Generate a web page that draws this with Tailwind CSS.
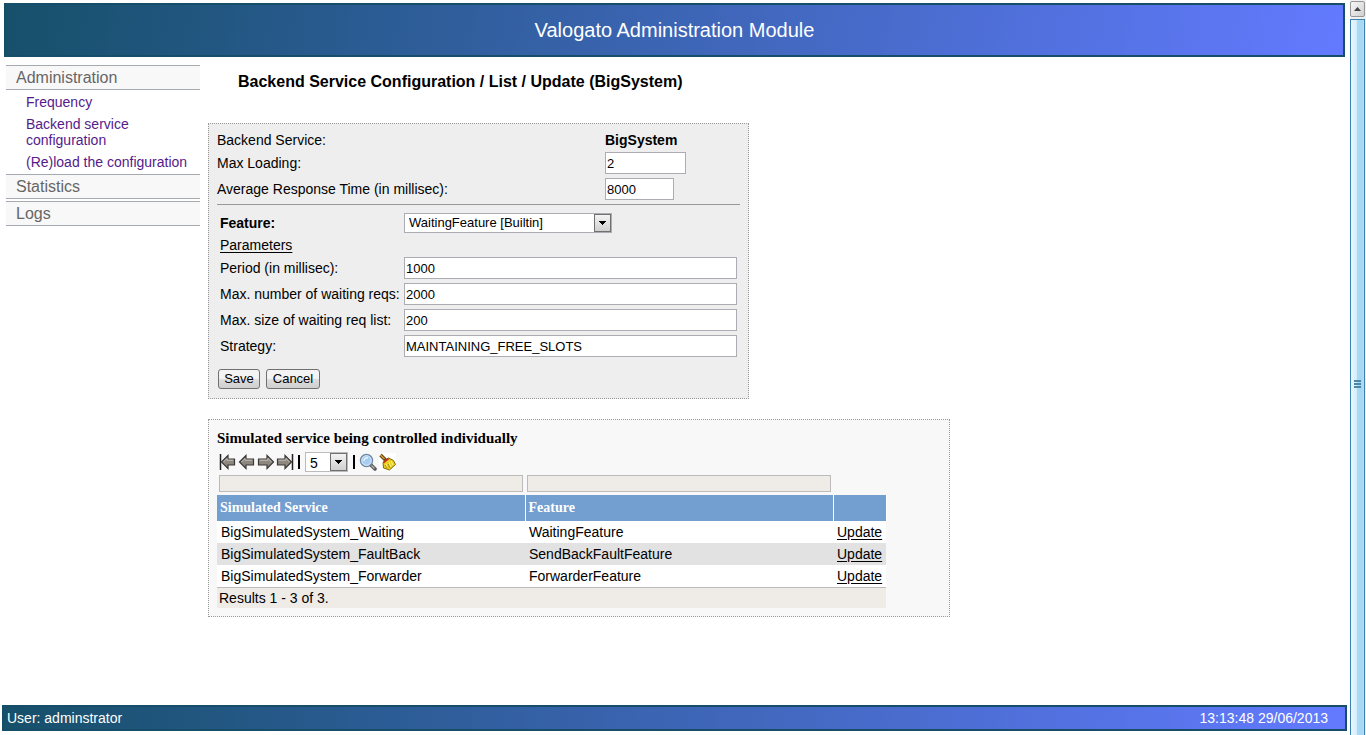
<!DOCTYPE html>
<html lang="en">
<head>
<meta charset="utf-8">
<meta name="viewport" content="width=device-width, initial-scale=1">
<title>Valogato Administration Module</title>
<script src="https://cdn.jsdelivr.net/npm/@tailwindcss/browser@4"></script>
</head>
<body class="flex min-h-screen bg-white font-['Liberation_Sans',Arial,sans-serif] text-sm leading-4 text-black">
<div class="flex min-w-0 flex-1 flex-col pt-[3px] pb-1">
  <header class="ml-1 mr-[5px] flex h-[54px] items-center justify-center border-2 border-[#164e6a] bg-linear-[100deg,#16506a,#637aff]">
    <h1 class="text-xl text-white">Valogato Administration Module</h1>
  </header>

  <div class="flex flex-1 items-start gap-2 pl-[6px] pt-2">
    <nav class="flex w-[194px] shrink-0 flex-col" aria-label="Main">
      <h2 class="h-[25px] border-y border-[#a5a9b0] bg-[#f8f8f8] pl-[10px] text-base leading-[23px] text-[#666]">Administration</h2>
      <ul class="flex flex-col gap-[6px] py-1 pl-5 text-[#551a8b]">
        <li><a href="#frequency">Frequency</a></li>
        <li><a href="#backend">Backend service<br>configuration</a></li>
        <li><a href="#reload" class="whitespace-nowrap">(Re)load the configuration</a></li>
      </ul>
      <h2 class="mb-[2px] h-[25px] border-y border-[#a5a9b0] bg-[#f8f8f8] pl-[10px] text-base leading-[23px] text-[#666]">Statistics</h2>
      <h2 class="h-[25px] border-y border-[#a5a9b0] bg-[#f8f8f8] pl-[10px] text-base leading-[23px] text-[#666]">Logs</h2>
    </nav>

    <main class="min-w-0 flex-1 pt-2">
      <h2 class="mb-8 pl-[30px] text-base leading-[18px] font-bold">Backend Service Configuration / List / Update (BigSystem)</h2>

      <form class="mb-5 w-full max-w-[541px] border border-dotted border-[#999] bg-[#eee] px-2 pt-2 pb-[9px]">
        <div class="grid grid-cols-[388px_1fr] items-center gap-y-1">
          <span>Backend Service:</span><strong>BigSystem</strong>
          <label for="load">Max Loading:</label>
          <input id="load" value="2" class="h-[22px] w-[81px] border border-[#abadb3] bg-white px-px text-[13px]">
          <label for="resp">Average Response Time (in millisec):</label>
          <input id="resp" value="8000" class="h-[22px] w-[69px] border border-[#abadb3] bg-white px-px text-[13px]">
        </div>
        <hr class="mt-1 mb-2 border-[#999]">
        <div class="grid grid-cols-[184px_333px] items-center gap-y-1 pl-[3px]">
          <label for="feat" class="font-bold">Feature:</label>
          <div class="relative h-5 w-[208px]">
            <select id="feat" class="h-5 w-full appearance-none border border-[#abadb3] bg-white pl-1 text-[13px]"><option>WaitingFeature [Builtin]</option></select>
            <span class="pointer-events-none absolute top-px right-px flex h-[18px] w-[17px] items-center justify-center border border-[#707070] bg-linear-to-b from-[#f3f3f3] to-[#d0d0d0]"><svg width="7" height="4" shape-rendering="crispEdges"><path d="M0 0h7L3.500 4z"/></svg></span>
          </div>
          <span class="col-span-2 underline underline-offset-2">Parameters</span>
          <label for="period">Period (in millisec):</label>
          <input id="period" value="1000" class="h-[22px] border border-[#abadb3] bg-white px-px text-[13px]">
          <label for="maxreq" class="whitespace-nowrap">Max. number of waiting reqs:</label>
          <input id="maxreq" value="2000" class="h-[22px] border border-[#abadb3] bg-white px-px text-[13px]">
          <label for="maxlist">Max. size of waiting req list:</label>
          <input id="maxlist" value="200" class="h-[22px] border border-[#abadb3] bg-white px-px text-[13px]">
          <label for="strategy">Strategy:</label>
          <input id="strategy" value="MAINTAINING_FREE_SLOTS" class="h-[22px] border border-[#abadb3] bg-white px-px text-[13px]">
        </div>
        <div class="mt-3 flex gap-[6px] pl-px">
          <button type="button" class="h-5 w-[42px] rounded-[3px] border border-[#707070] bg-linear-to-b from-[#f3f3f3] from-50% via-[#dedede] via-50% to-[#cfcfcf] text-[13px]">Save</button>
          <button type="button" class="h-5 w-[54px] rounded-[3px] border border-[#707070] bg-linear-to-b from-[#f3f3f3] from-50% via-[#dedede] via-50% to-[#cfcfcf] text-[13px]">Cancel</button>
        </div>
      </form>

      <section class="w-full max-w-[742px] border border-dotted border-[#999] bg-[#f8f8f8] px-2 pt-[9px] pb-2">
        <h3 class="font-['Liberation_Serif',serif] text-[15px] leading-[18px] font-bold">Simulated service being controlled individually</h3>
        <svg class="hidden">
          <defs>
            <linearGradient id="metal" x1="0" y1="0" x2="0" y2="1"><stop offset="0" stop-color="#b5b0a9"/><stop offset="1" stop-color="#6e6963"/></linearGradient>
          </defs>
        </svg>
        <div class="mt-[5px] flex h-5 items-center pl-[2px]">
          <button type="button" aria-label="First page" class="mr-px"><svg width="18" height="18" viewBox="0 0 18 18"><path d="M1.500 1v16" stroke="#222" stroke-width="1.500"/><path d="M2.500 9 9 2.500V6h6.500v6H9v3.500z" fill="#8d8780" stroke="#3a3835" stroke-width="1.200"/><path d="M4.500 9 8 5.500V7.200h6.300" fill="none" stroke="#c4bfb8"/></svg></button>
          <button type="button" aria-label="Previous page" class="mr-px"><svg width="18" height="18" viewBox="0 0 18 18"><path d="M1.500 9 8 2.500V6h7.500v6H8v3.500z" fill="#8d8780" stroke="#3a3835" stroke-width="1.200"/><path d="M3.500 9 7 5.500V7.200h7.300" fill="none" stroke="#c4bfb8"/></svg></button>
          <button type="button" aria-label="Next page" class="mr-px"><svg width="18" height="18" viewBox="0 0 18 18"><path d="M16.500 9 10 2.500V6H1.500v6H10v3.500z" fill="#8d8780" stroke="#3a3835" stroke-width="1.200"/><path d="M2.500 7.200H11V5.200L14.500 9" fill="none" stroke="#c4bfb8"/></svg></button>
          <button type="button" aria-label="Last page" class="mr-1"><svg width="18" height="18" viewBox="0 0 18 18"><path d="M16.500 1v16" stroke="#222" stroke-width="1.500"/><path d="M15.500 9 9 2.500V6H1.500v6H9v3.500z" fill="#8d8780" stroke="#3a3835" stroke-width="1.200"/><path d="M2.500 7.200H10V5.200L13.500 9" fill="none" stroke="#c4bfb8"/></svg></button>
          <span class="h-[14px] w-[2px] bg-black"></span>
          <div class="relative mx-[5px] h-5 w-[43px]">
            <select aria-label="Rows per page" class="h-5 w-full appearance-none border border-[#bbb] bg-white pl-1 text-sm"><option>5</option></select>
            <span class="pointer-events-none absolute top-px right-px flex h-[18px] w-[17px] items-center justify-center border border-[#707070] bg-linear-to-b from-[#f3f3f3] to-[#d0d0d0]"><svg width="7" height="4" shape-rendering="crispEdges"><path d="M0 0h7L3.500 4z"/></svg></span>
          </div>
          <span class="h-[14px] w-[2px] bg-black"></span>
          <button type="button" aria-label="Search" class="ml-1 mr-[2px]"><svg width="18" height="18" viewBox="0 0 18 18"><path d="m12 12 4 4" stroke="#555" stroke-width="3.500" stroke-linecap="round"/><path d="m12.500 12.500 3 3" stroke="#bbb" stroke-width="1.200"/><circle cx="7.500" cy="7.500" r="6" fill="#a5cdf2" stroke="#72879f" stroke-width="1.500"/><circle cx="7.500" cy="7.500" r="4.800" fill="none" stroke="#dcecfb"/><path d="M5 8a3 3 0 0 1 4-3" fill="none" stroke="#e8f4ff" stroke-width="1.500"/></svg></button>
          <button type="button" aria-label="Clear filter"><svg width="17" height="18" viewBox="0 0 17 18" class="bg-white"><path d="m1.500 2 5 5" stroke="#604010" stroke-width="3.500"/><path d="m1.500 2 4 4" stroke="#d8a02c" stroke-width="1.500"/><path d="M4 9.500 9.500 5l5 2.500 2 4-6 5.500-6-2z" fill="#ead21c" stroke="#806808"/><path d="m4.500 9.500 5-4" stroke="#c03018" stroke-width="1.800"/><path d="m7 11 1 3M10 9l2 5M12 8l2 4" stroke="#fff280"/><path d="m6 12 2 3M9 11l2 4" stroke="#a88c10"/></svg></button>
        </div>

        <table class="mt-[3px] w-full max-w-[669px] table-fixed border-collapse">
          <colgroup><col class="w-[308px]"><col class="w-[308px]"><col class="w-[53px]"></colgroup>
          <thead>
            <tr>
              <td class="h-5 px-[2px] pb-[3px]"><input aria-label="Filter by simulated service" class="block h-[17px] w-full border border-[#bbb] bg-[#efebe7] px-px text-[13px]"></td>
              <td class="h-5 px-[2px] pb-[3px]"><input aria-label="Filter by feature" class="block h-[17px] w-full border border-[#bbb] bg-[#efebe7] px-px text-[13px]"></td>
              <td></td>
            </tr>
            <tr class="h-[26px] bg-[#739ed0] text-left font-['Liberation_Serif',serif] text-white">
              <th class="border-r border-white px-[3px]">Simulated Service</th>
              <th class="border-r border-white px-[3px]">Feature</th>
              <th class="border-r border-white" aria-label="Actions"></th>
            </tr>
          </thead>
          <tbody>
            <tr class="h-[22px] bg-white"><td class="px-1">BigSimulatedSystem_Waiting</td><td class="px-1">WaitingFeature</td><td class="pl-1"><a href="#w" class="underline underline-offset-2">Update</a></td></tr>
            <tr class="h-[22px] bg-[#e2e2e2]"><td class="px-1">BigSimulatedSystem_FaultBack</td><td class="px-1">SendBackFaultFeature</td><td class="pl-1"><a href="#b" class="underline underline-offset-2">Update</a></td></tr>
            <tr class="h-[22px] bg-white"><td class="px-1">BigSimulatedSystem_Forwarder</td><td class="px-1">ForwarderFeature</td><td class="pl-1"><a href="#f" class="underline underline-offset-2">Update</a></td></tr>
          </tbody>
          <tfoot><tr class="h-[21px] border-t border-[#bbb] bg-[#efebe7]"><td colspan="3" class="px-[2px]">Results 1 - 3 of 3.</td></tr></tfoot>
        </table>
      </section>
    </main>
  </div>

  <footer class="ml-[2px] mr-[3px] flex h-[26px] items-center justify-between border-2 border-[#164e6a] bg-linear-[92deg,#16506a,#637aff] pl-[3px] pr-[17px] text-white">
    <span>User: adminstrator</span><time>13:13:48 29/06/2013</time>
  </footer>
</div>

<div class="flex w-4 shrink-0 flex-col bg-[#f0f0f0] pt-px" aria-hidden="true">
  <div class="mr-px mb-[2px] flex h-4 items-center justify-center rounded-[2px] border border-[#979797] bg-linear-to-br from-[#f8f8f8] to-[#cfcfcf]"><svg width="7" height="4"><path d="M0 4h7L3.500 0z" fill="#444"/></svg></div>
  <div class="mr-px flex flex-1 items-center justify-center border-x border-t border-[#3c7fb1] bg-linear-[90deg,#e9f7fe,#d4edfc_45%,#a9dbf5_50%,#a5d6f2_85%,#c4dcea]">
    <div class="mt-3 flex flex-col gap-px"><i class="h-[2px] w-[7px] bg-[#4a8aa8]"></i><i class="h-[2px] w-[7px] bg-[#4a8aa8]"></i><i class="h-[2px] w-[7px] bg-[#4a8aa8]"></i></div>
  </div>
</div>
</body>
</html>
